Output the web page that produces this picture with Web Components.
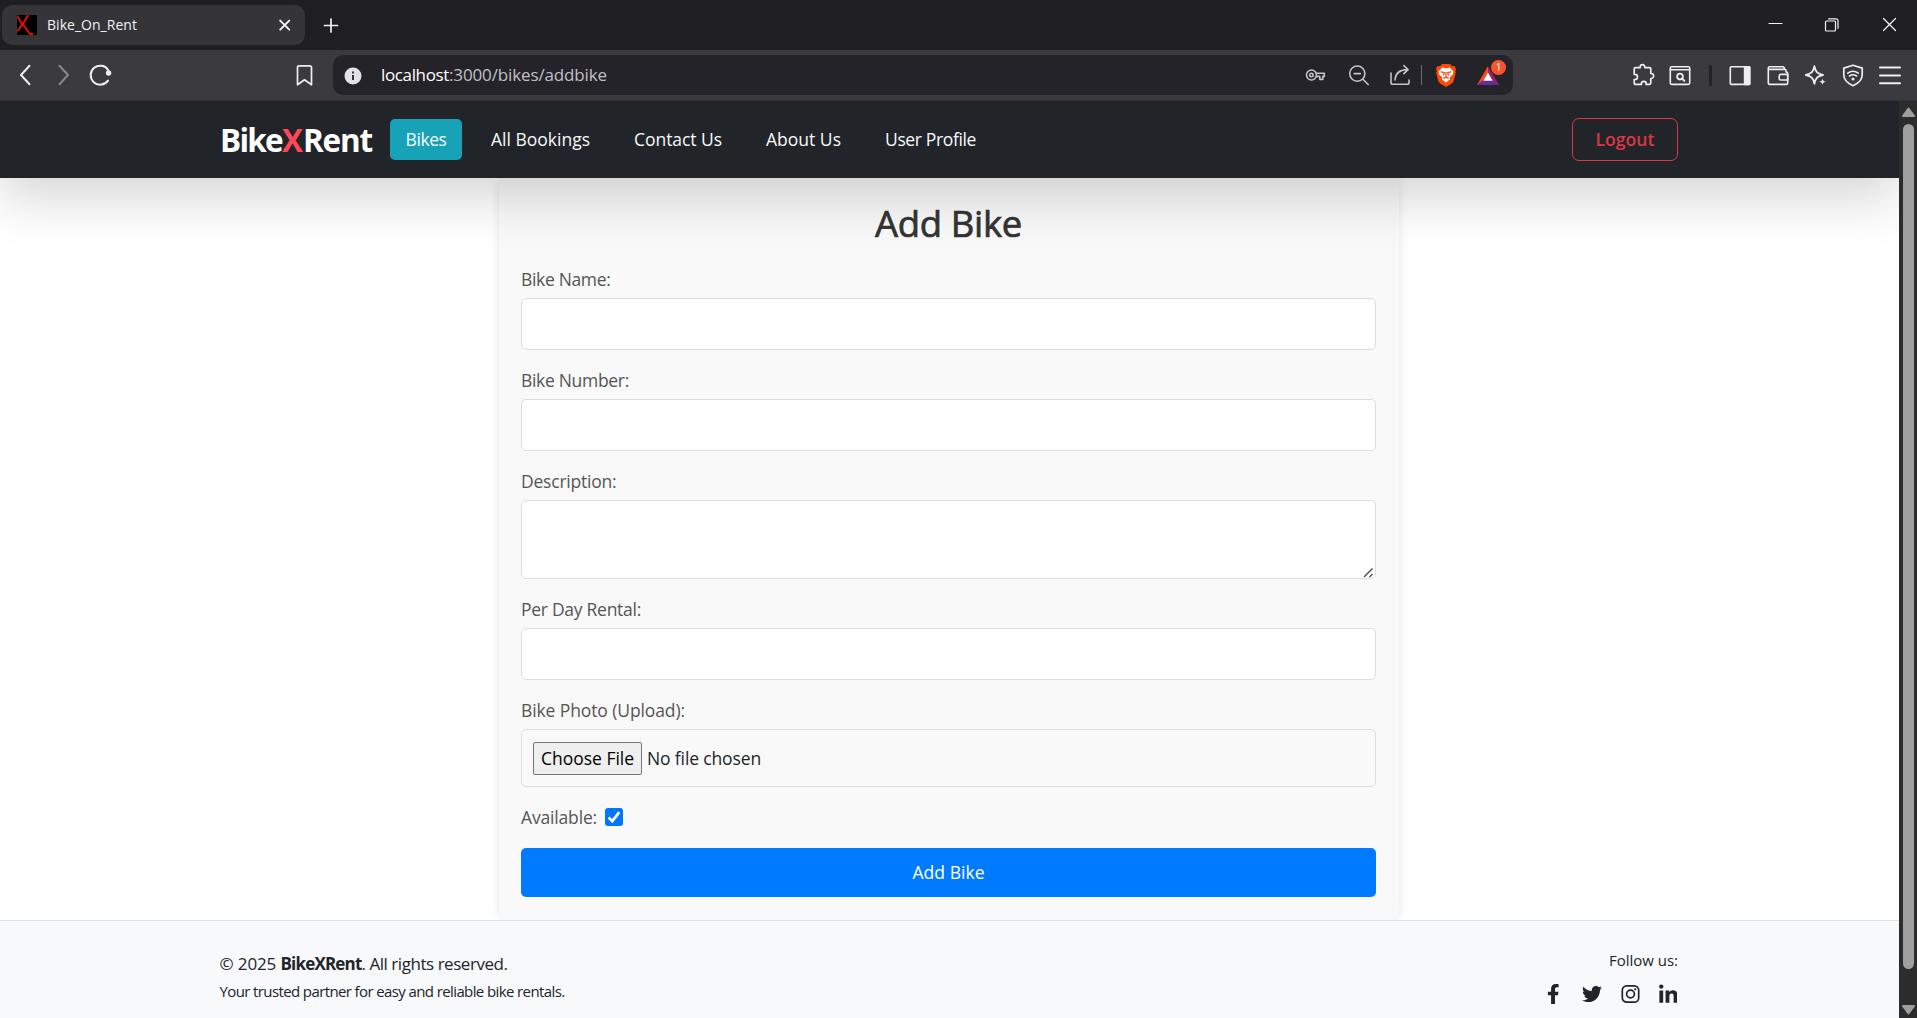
<!DOCTYPE html>
<html lang="en">
<head>
<meta charset="utf-8">
<title>Bike_On_Rent</title>
<style>
html,body{margin:0;height:100%;overflow:hidden}
body{font-family:"Open Sans","Noto Sans",sans-serif;font-size:17.5px;line-height:27px;color:#212529;background:#fff}
</style>
</head>
<body>
<browser-window>
  <tab-strip slot="chrome"></tab-strip>
  <tool-bar slot="chrome"></tool-bar>
  <site-nav></site-nav>
  <bike-form></bike-form>
  <site-footer></site-footer>
  <scroll-bar slot="scroll"></scroll-bar>
</browser-window>
<script>
const define = (name, html, after) => customElements.define(name, class extends HTMLElement {
  constructor() {
    super();
    this.attachShadow({ mode: "open" }).innerHTML = html;
  }
  connectedCallback() { if (after) after.call(this, this.shadowRoot); }
});

define("browser-window", `
<style>
:host{display:flex;flex-direction:column;width:1917px;height:1018px;overflow:hidden}
.view{display:flex;flex:1;min-height:0}
.page{flex:1;min-width:0;display:flex;flex-direction:column;overflow:hidden}
</style>
<slot name="chrome"></slot>
<div class="view"><div class="page"><slot></slot></div><slot name="scroll"></slot></div>`);

/* Icons: 24x24 grid, stroke follows currentColor */
const ICONS = {
  back: `<path d="M16.500 2.800 8 12l8.500 9.200" stroke-width="2"/>`,
  forward: `<path d="M8.500 2.800 17 12l-8.500 9.200" stroke-width="2"/>`,
  reload: `<path d="M20.300 7.200A9.500 9.500 0 1 0 20 17.600" stroke-width="2"/><circle cx="20.600" cy="10" r="2.700" fill="currentColor" stroke="none"/>`,
  bookmark: `<path d="M4.500 4.500Q4.500 2.800 6.200 2.800h10.600q1.700 0 1.700 1.700v17.300l-7-5-7 5Z" stroke-width="1.700"/>`,
  info: `<circle cx="12" cy="13" r="8.500" fill="currentColor" stroke="none"/><path d="M12 12v5M12 8.600v1.800" stroke="#242329" stroke-width="1.800" stroke-linecap="butt"/>`,
  key: `<circle cx="7.500" cy="12" r="5"/><circle cx="7.500" cy="12" r="1.700"/><path d="M12.100 10.200h8.200v3.200h-1.500v3h-3v-3h-3.600"/>`,
  zoomout: `<circle cx="10.300" cy="10.600" r="7.600"/><path d="M7.200 10.600h6.200M15.900 16.200l5.300 5.300"/>`,
  share: `<path d="M3 10v9.500q0 1.800 1.800 1.800h14.400q1.800 0 1.800-1.800V17M7 17c.400-6.500 4.500-10.400 12.800-10.400M15.800 2.700l4.300 3.900-4.300 4"/>`,
  brave: `<path d="M8 1h8l2 2.200 2.600-.200 1.400 3.200-.700 2 .500 1.500-2 8q-.500 1.700-2 2.700L12 24l-5.800-3.600q-1.500-1-2-2.700l-2-8 .500-1.500-.700-2L3.400 3l2.600.2Z" fill="#fb4a0c" stroke="none"/><path d="m8.300 4.600 3.700.800 3.700-.800 3.700 4-.700 3.200-3.200 2.800.600 1.600L12 19.600l-4.100-3.400.600-1.600-3.200-2.800-.700-3.200Z" fill="#fff" stroke="none"/><path d="m7 8.800 3.300.900-.900 2.300M17 8.800l-3.300.900.900 2.300M12 9.500v4.300M9.800 15.200l2.200-1 2.200 1" stroke="#fb4a0c" stroke-width="1.300"/>`,
  bat: `<path d="M12 3 1 22l11-6Z" fill="#ff4724" stroke="none"/><path d="m12 3 11 19-11-6Z" fill="#9e1f63" stroke="none"/><path d="M1 22h22l-11-9Z" fill="#662d91" stroke="none"/><path d="m12 9.500 4.600 8.300H7.400Z" fill="#fff" stroke="none"/>`,
  puzzle: `<path d="M3.300 4.600h4.900V4a2.300 2.300 0 0 1 4.600 0v.600h4.700q1.300 0 1.300 1.300v4.600h.300a2.500 2.500 0 0 1 0 5h-.300v4.600q0 1.300-1.300 1.300h-3.300v-.700a2.400 2.400 0 0 0-4.800 0v.700H3.500q-1.300 0-1.300-1.300v-3.600h.700a2.600 2.600 0 0 0 0-5.200h-.700V5.800q0-1.200 1.100-1.200Z" stroke-width="1.700"/>`,
  pagesearch: `<rect x="2.300" y="3.800" width="19.400" height="17.600" rx="1.300"/><path d="M2.300 6.800h19.400"/><circle cx="12" cy="13.600" r="2.900" stroke-width="1.800"/><path d="m14.200 15.700 2.200 2.200" stroke-width="2"/>`,
  sidebar: `<rect x="2.300" y="3.800" width="19.400" height="17.600" rx="1"/><path d="M16.600 3.800h5v17.600h-5Z" fill="currentColor"/>`,
  wallet: `<path d="M20 9V7.700q0-1.300-1.300-1.300H2.300V20q0 1.400 1.400 1.400h16.500q1.500 0 1.500-1.400v-9.600q0-1.400-1.500-1.400M2.300 6.400V5q0-1.200 1.200-1.200h13.300q1.400 0 1.900 2.500"/><path d="M21.700 11.400h-7q-1.500 0-1.500 1.500v2.600q0 1.500 1.500 1.500h7Z"/>`,
  sparkle: `<path d="M10.400 3.200c1 5.500 2.700 7.600 8.600 8.800-5.900 1.200-7.600 3.300-8.600 8.800C9.400 15.300 7.700 13.200 1.800 12c5.900-1.200 7.600-3.300 8.600-8.800Z" stroke-width="1.800"/><path d="M18.500 14.800c.500 3 1 3.500 4 4-3 .500-3.500 1-4 4-.500-3-1-3.500-4-4 3-.500 3.500-1 4-4Z" fill="currentColor" stroke="#3b3a3f" stroke-width=".4"/>`,
  shield: `<path d="m12 2.200 9.200 2.900v7c0 5-4 8.400-9.200 10.600-5.200-2.200-9.200-5.600-9.200-10.600v-7Z" stroke-width="1.700"/><path d="M6.800 10.200q5.200-3.900 10.400 0M8.500 13q3.500-2.600 7 0" stroke-width="1.600"/><circle cx="12" cy="16" r="1.500" fill="currentColor" stroke="none"/>`,
  menu: `<path d="M2 4.600h20M2 12.500h20M2 20.300h20" stroke-width="2"/>`,
  close: `<path d="m7.200 7.600 9 9M16.200 7.600l-9 9" stroke-width="2"/>`,
  plus: `<path d="M12 6v13M5.500 12.500h13" stroke-width="1.700"/>`,
  wmin: `<path d="M5 10.500h13" stroke-width="1.200"/>`,
  wmax: `<rect x="5.500" y="8" width="10" height="10" rx="1" stroke-width="1.200"/><path d="M8.500 5.800h7.500q2 0 2 2v7.500" stroke-width="1.200"/>`,
  wclose: `<path d="m5.500 5.500 12 12M17.500 5.500l-12 12" stroke-width="1.300"/>`,
  favicon: `<rect x="2" y="2" width="20" height="20" rx="1" fill="#000" stroke="none"/><path d="M2.800 4Q6 10 9.500 13.500L15 21h2.500M12.800 2.800Q9 10 2.800 17.500" stroke="#f00808" stroke-width="1.900"/>`
};
customElements.define("ui-icon", class extends HTMLElement {
  constructor() { super(); this.attachShadow({ mode: "open" }); }
  connectedCallback() {
    const gap = this.getAttribute("gap") || 0;
    this.shadowRoot.innerHTML = `<style>:host{display:block;flex:none;width:24px;height:24px;margin-left:${gap}px}svg{display:block}</style>
    <svg width="24" height="24" viewBox="0 0 24 24" fill="none" stroke="currentColor" stroke-width="1.600" stroke-linecap="round" stroke-linejoin="round">${ICONS[this.getAttribute("name")]}</svg>`;
  }
});

define("tab-strip", `
<style>
:host{display:flex;height:50px;background:#1f1e23;color:#f2f2f4;align-items:center;box-sizing:border-box;padding:0 9.500px 0 2px}
.tab{display:flex;align-items:center;width:303px;height:40px;border-radius:10px;background:#353438;font-size:14px;line-height:20px}
fit-text{margin-left:8px}
.x{margin-left:auto;margin-right:8px}
.win{display:flex;margin-left:auto;margin-right:6px}
</style>
<div class="tab"><ui-icon name="favicon" gap="13"></ui-icon><fit-text w="90">Bike_On_Rent</fit-text><ui-icon class="x" name="close" style="margin-left:auto"></ui-icon></div>
<ui-icon name="plus" gap="14"></ui-icon>
<div class="win"><ui-icon name="wmin"></ui-icon><ui-icon name="wmax" gap="32"></ui-icon><ui-icon name="wclose" gap="34"></ui-icon></div>`);

define("tool-bar", `
<style>
:host{display:flex;align-items:center;box-sizing:border-box;height:51px;background:#3b3a3f;border-bottom:1px solid #323136;color:#eeedf0}
.addr{display:flex;align-items:center;box-sizing:border-box;width:1180px;height:40px;margin-left:16.500px;padding:0 13px 0 8px;border-radius:10px;background:#242329;line-height:24px;font-size:17px}
.addr ui-icon{color:#c4c3c8}
.addr ui-icon.i{color:#e3e2e8}
.url{display:flex;flex:1;margin-left:16px;color:#fff}
.url .dim{color:#c1c0c6}
.bar{flex:none;height:20px;width:1.500px;background:#6a696f;margin-left:8.500px}
.sep{flex:none;height:21px;width:2.500px;border-radius:1px;background:#232227;margin-left:17px}
ui-icon.dimi{color:#88878c}
.bat{position:relative;display:flex}
.badge{position:absolute;left:33px;top:-3px;width:15px;height:15px;border-radius:50%;background:#fb542b;color:#fff;font-size:10px;line-height:15px;text-align:center}
.right{display:flex;align-items:center;margin-left:auto;padding-right:15px}
</style>
<ui-icon name="back" gap="13"></ui-icon><ui-icon class="dimi" name="forward" gap="14"></ui-icon><ui-icon name="reload" gap="13"></ui-icon><ui-icon name="bookmark" gap="180.500"></ui-icon>
<div class="addr"><ui-icon class="i" name="info"></ui-icon>
<div class="url"><fit-text w="68">localhost</fit-text><fit-text class="dim" w="158">:3000/bikes/addbike</fit-text></div>
<ui-icon name="key"></ui-icon><ui-icon name="zoomout" gap="19"></ui-icon><ui-icon name="share" gap="17.500"></ui-icon><div class="bar"></div>
<ui-icon name="brave" gap="12"></ui-icon><div class="bat"><ui-icon name="bat" gap="18"></ui-icon><span class="badge">1</span></div></div>
<div class="right"><ui-icon name="puzzle"></ui-icon><ui-icon name="pagesearch" gap="12"></ui-icon><div class="sep"></div>
<ui-icon name="sidebar" gap="16.500"></ui-icon><ui-icon name="wallet" gap="14"></ui-icon><ui-icon name="sparkle" gap="13.500"></ui-icon><ui-icon name="shield" gap="13"></ui-icon><ui-icon name="menu" gap="13.500"></ui-icon></div>`);

define("site-nav", `
<style>
:host{display:flex;flex:none;align-items:center;box-sizing:border-box;height:77px;padding:0 221px 0 219px;background:#212529;color:#f8f9fa;position:relative;z-index:2;box-shadow:0 18px 54px rgba(0,0,0,.175)}
.brand{display:flex;font-size:31.500px;font-weight:700;line-height:40px;color:#fff;width:170px;margin:1px 0 0 1px}
.brand .x{color:#ff4757}
nav{display:flex;align-items:center}
nav fit-text{margin-right:44px}
.on{display:flex;justify-content:center;width:72px;height:41px;line-height:41px;border-radius:5px;background:#17a2b8;margin-right:29px}
.on fit-text{margin:0}
.out{display:flex;align-items:center;justify-content:center;box-sizing:border-box;width:106px;height:43px;margin-left:auto;border:1px solid #dc3545;border-radius:7px;color:#dc3545;font-weight:600}
</style>
<div class="brand"><fit-text w="62">Bike</fit-text><fit-text class="x" w="21">X</fit-text><fit-text w="69">Rent</fit-text></div>
<nav><div class="on"><fit-text w="41">Bikes</fit-text></div>
<fit-text w="99">All Bookings</fit-text><fit-text w="88">Contact Us</fit-text><fit-text w="75">About Us</fit-text><fit-text w="91">User Profile</fit-text></nav>
<div class="out"><fit-text w="59">Logout</fit-text></div>`);

define("form-field", `
<style>
:host{display:flex;flex-direction:column;align-items:stretch;gap:6px;margin-bottom:16px;position:relative}
.label{display:flex;height:27px;line-height:29px;color:#555}
::slotted(*){display:block;box-sizing:border-box;width:100%;height:52px;margin:0;border:1px solid #ddd;border-radius:5px;background:#fff;outline:none}
::slotted(textarea){height:79px;resize:none}
::slotted(file-picker){display:flex;height:58px;background:transparent;padding-left:11px}
.grip{display:none;position:absolute;right:2px;bottom:1px}
:host([grip]) .grip{display:block}
</style>
<div class="label"></div><slot></slot>
<svg class="grip" width="11" height="11" viewBox="0 0 11 11"><path d="M1 10 9.500 1.500M6.500 10 9.500 7" fill="none" stroke="#555" stroke-width="1.500"/></svg>`, function (root) {
  const t = document.createElement("fit-text");
  t.setAttribute("w", this.getAttribute("w"));
  t.textContent = this.getAttribute("label");
  root.querySelector(".label").replaceChildren(t);
});

define("file-picker", `
<style>
:host{align-items:center}
.btn{display:flex;align-items:center;justify-content:center;box-sizing:border-box;width:109px;height:33px;border:1px solid #767676;border-radius:2px;background:#efefef;color:#000}
.none{margin-left:5px}
</style>
<span class="btn"><fit-text w="93">Choose File</fit-text></span><fit-text class="none" w="114">No file chosen</fit-text>`);

define("check-box", `
<style>:host{display:block;width:18px;height:18px;border-radius:3px;background:#0075ff}svg{display:block}</style>
<svg width="18" height="18" viewBox="0 0 18 18"><path d="m3.700 9.500 3.600 3.600 7-9" fill="none" stroke="#fff" stroke-width="2.700"/></svg>`);

define("bike-form", `
<style>
:host{display:block;flex:none;box-sizing:border-box;width:900px;height:742px;margin:0 0 0 499px;padding:22px 23px 23px 22px;background:#f9f9f9;border-radius:9px;box-shadow:0 0 11px rgba(0,0,0,.1)}
h2{display:flex;justify-content:center;margin:0 0 22px;height:43px;line-height:46px;font-size:36.500px;font-weight:400;-webkit-text-stroke:.7px #333;color:#333}
.avail{display:flex;align-items:center;height:27px;margin:17px 0;color:#555}
check-box{margin:-1px 0 0 8px}
button{display:flex;align-items:center;justify-content:center;width:100%;height:49px;padding:0;border:0;border-radius:5px;background:#007bff;color:#fff;font:inherit}
</style>
<h2><fit-text w="147">Add Bike</fit-text></h2>
<form-field label="Bike Name:" w="89.500"><input></form-field>
<form-field label="Bike Number:" w="108"><input></form-field>
<form-field label="Description:" w="95.500" grip><textarea></textarea></form-field>
<form-field label="Per Day Rental:" w="120"><input></form-field>
<form-field label="Bike Photo (Upload):" w="164"><file-picker></file-picker></form-field>
<div class="avail"><fit-text w="76">Available:</fit-text><check-box></check-box></div>
<button><fit-text w="72">Add Bike</fit-text></button>`);

define("site-footer", `
<style>
:host{display:flex;flex:1;justify-content:space-between;box-sizing:border-box;padding:29px 221px 0 219.500px;border-top:1px solid #dee2e6;background:#f8f9fb;position:relative}
.copy{display:flex;height:27px;white-space:pre;margin-top:0;font-size:17px}
b{font-weight:700}
small{display:flex;font-size:15px;line-height:24px;margin-top:2px}
.follow{display:flex;flex-direction:column;align-items:flex-end}
.follow small{margin:-2px 0 0}
.soc{display:flex;align-items:center;margin:12px 1px 0 0;height:20px}
svg{display:block;fill:#212529}
</style>
<div><div class="copy"><fit-text w="61">© 2025 </fit-text><b><fit-text w="81">BikeXRent</fit-text></b><fit-text w="146">. All rights reserved.</fit-text></div>
<small><fit-text w="345">Your trusted partner for easy and reliable bike rentals.</fit-text></small></div>
<div class="follow"><small><fit-text w="69">Follow us:</fit-text></small>
<div class="soc">
<svg width="12.500" height="20" viewBox="0 0 320 512"><path d="M279.140 288l14.220-92.660h-88.910v-60.130c0-25.350 12.420-50.060 52.240-50.060h40.420V6.260S260.430 0 225.360 0c-73.220 0-121.080 44.380-121.080 124.720v70.620H22.890V288h81.390v224h100.170V288z"/></svg>
<svg style="margin-left:22px" width="20" height="20" viewBox="0 0 512 512"><path d="M459.370 151.716c.325 4.548.325 9.097.325 13.645 0 138.720-105.583 298.558-298.558 298.558-59.452 0-114.680-17.219-161.137-47.106 8.447.974 16.568 1.299 25.340 1.299 49.055 0 94.213-16.568 130.274-44.832-46.132-.975-84.792-31.188-98.112-72.772 6.498.974 12.995 1.624 19.818 1.624 9.421 0 18.843-1.300 27.614-3.573-48.081-9.747-84.143-51.980-84.143-102.985v-1.299c13.969 7.797 30.214 12.670 47.431 13.319-28.264-18.843-46.781-51.005-46.781-87.391 0-19.492 5.197-37.360 14.294-52.954 51.655 63.675 129.300 105.258 216.365 109.807-1.624-7.797-2.599-15.918-2.599-24.040 0-57.828 46.782-104.934 104.934-104.934 30.213 0 57.502 12.670 76.670 33.137 23.715-4.548 46.456-13.320 66.599-25.340-7.798 24.366-24.366 44.833-46.132 57.827 21.117-2.273 41.584-8.122 60.426-16.243-14.292 20.791-32.161 39.308-52.628 54.253z"/></svg>
<svg style="margin-left:19px" width="19" height="20" viewBox="0 0 19 20"><g fill="none" stroke="#212529" stroke-width="1.700"><rect x="1.300" y="1.800" width="16.400" height="16.400" rx="4.500"/><circle cx="9.500" cy="10" r="3.900"/></g><circle cx="14.200" cy="5.300" r="1.100"/></svg>
<svg style="margin-left:19px" width="18.500" height="20" viewBox="0 -10 448 488"><path d="M100.280 448H7.400V148.900h92.880zM53.790 108.100C24.090 108.100 0 83.500 0 53.800a53.790 53.790 0 0 1 107.580 0c0 29.700-24.100 54.300-53.790 54.300zM447.900 448h-92.680V302.400c0-34.700-.7-79.200-48.290-79.200-48.290 0-55.690 37.700-55.690 76.700V448h-92.780V148.900h89.080v40.800h1.300c12.400-23.500 42.690-48.300 87.880-48.300 94 0 111.280 61.900 111.280 142.300V448z"/></svg>
</div></div>`);

define("scroll-bar", `
<style>
:host{display:flex;flex-direction:column;align-items:center;flex:none;box-sizing:border-box;width:18px;padding:6px 0 3px 1px;background:#2c2c2c;position:relative;z-index:3}
.thumb{width:11px;height:845px;border-radius:6px;background:#9f9f9f;margin:7px 0 auto}
svg{display:block;fill:#9f9f9f;stroke:#9f9f9f;stroke-width:2;stroke-linejoin:round}
</style>
<svg width="13" height="10" viewBox="0 0 13 10"><path d="M6.500 1.500 12 9H1Z"/></svg><div class="thumb"></div>
<svg width="13" height="10" viewBox="0 0 13 10"><path d="M6.500 8.500 12 1H1Z"/></svg>`);

/* Inline text run whose tracking is tuned to a given advance width */
define("fit-text", `<style>:host{display:block;flex:none;white-space:pre}span{display:inline-block}</style><span><slot></slot></span>`, function (root) {
  const target = parseFloat(this.getAttribute("w")), span = root.querySelector("span");
  const n = [...this.textContent].length;
  span.style.letterSpacing = "0";
  span.style.letterSpacing = (target - span.getBoundingClientRect().width) / n + "px";
});
</script>
</body>
</html>
